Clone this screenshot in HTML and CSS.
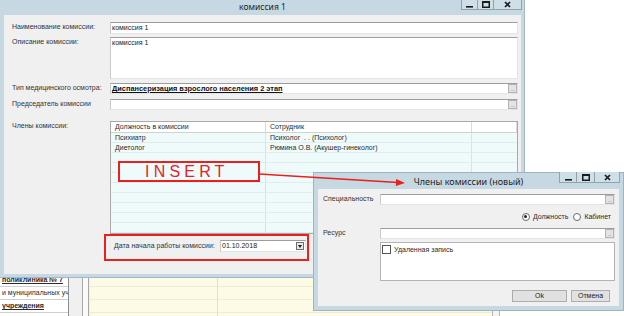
FILE: index.html
```html
<!DOCTYPE html>
<html lang="ru">
<head>
  <meta charset="UTF-8" />
  <meta name="viewport" content="width=device-width, initial-scale=1.0"/>
  <title>Члены комиссии</title>
  <link rel="stylesheet" href="styles.css">
</head>

<body>
  <div class="desk">

    <!-- BACKGROUND APP -->
    <div class="bg-app">
      <div class="tree">
        <div class="tree-row strong">поликлиника № 7</div>
        <div class="tree-row">и муниципальных учреждений</div>
        <div class="tree-row strong">учреждения</div>
      </div>
      <div class="splitter"><span></span></div>
      <div class="sheet"></div>
      <div class="sheet-edge"></div>
    </div>

    <!-- MAIN WINDOW -->
    <div class="win main-win">
      <div class="titlebar">
        <span></span>
        <div class="title">комиссия 1</div>
        <div class="caption-btns">
          <span class="cbtn min"><svg width="7" height="7" viewBox="0 0 7 7"><rect x="0" y="5" width="7" height="1.6" fill="#1a1a1a"/></svg></span>
          <span class="cbtn max"><svg width="8" height="7" viewBox="0 0 8 7"><rect x="0.75" y="0.75" width="6.5" height="5.5" fill="none" stroke="#1a1a1a" stroke-width="1.5"/><rect x="0" y="0" width="8" height="2" fill="#1a1a1a"/></svg></span>
          <span class="cbtn close"><svg width="7" height="7" viewBox="0 0 7 7"><path d="M1 1 L6 6 M6 1 L1 6" stroke="#1a1a1a" stroke-width="1.7"/></svg></span>
        </div>
      </div>

      <div class="client form">
        <div class="row">
          <label>Наименование комиссии:</label>
          <div class="field">комиссия 1</div>
        </div>
        <div class="row gap-3">
          <label>Описание комиссии:</label>
          <div class="field area">комиссия 1</div>
        </div>
        <div class="row gap-4">
          <label>Тип медицинского осмотра:</label>
          <div class="field short pick"><b class="link">Диспансеризация взрослого населения 2 этап</b><span class="dots">...</span></div>
        </div>
        <div class="row gap-5">
          <label>Председатель комиссии</label>
          <div class="field short pick"><span class="dots">...</span></div>
        </div>
        <div class="row gap-11">
          <label>Члены комиссии:</label>
          <div class="members">
            <div class="cell head">Должность в комиссии</div>
            <div class="cell head">Сотрудник</div>
            <div class="cell head"></div>
            <div class="cell">Психиатр</div>
            <div class="cell">Психолог &nbsp;. . (Психолог)</div>
            <div class="cell"></div>
            <div class="cell">Диетолог</div>
            <div class="cell">Рюмина О.В. (Акушер-гинеколог)</div>
            <div class="cell"></div>
            <div class="cell"></div><div class="cell"></div><div class="cell"></div>
            <div class="cell"></div><div class="cell"></div><div class="cell"></div>
            <div class="cell"></div><div class="cell"></div><div class="cell"></div>
            <div class="cell"></div><div class="cell"></div><div class="cell"></div>
            <div class="cell"></div><div class="cell"></div><div class="cell"></div>
            <div class="cell"></div><div class="cell"></div><div class="cell"></div>
            <div class="cell"></div><div class="cell"></div><div class="cell"></div>
            <div class="cell"></div><div class="cell"></div><div class="cell"></div>
          </div>
        </div>
        <div class="row gap-6">
          <span></span>
          <div class="date-row">
            <label>Дата начала работы комиссии:</label>
            <div class="field date">01.10.2018<span class="drop"></span></div>
          </div>
        </div>
      </div>
    </div>

    <!-- DIALOG -->
    <div class="win dlg">
      <div class="titlebar tall">
        <span></span>
        <div class="title">Члены комиссии (новый)</div>
        <div class="caption-btns">
          <span class="cbtn d-min"><svg width="7" height="7" viewBox="0 0 7 7"><rect x="0" y="5" width="7" height="1.6" fill="#1a1a1a"/></svg></span>
          <span class="cbtn d-max"><svg width="8" height="7" viewBox="0 0 8 7"><rect x="0.75" y="0.75" width="6.5" height="5.5" fill="none" stroke="#1a1a1a" stroke-width="1.5"/><rect x="0" y="0" width="8" height="2" fill="#1a1a1a"/></svg></span>
          <span class="cbtn d-close"><svg width="7" height="7" viewBox="0 0 7 7"><path d="M1 1 L6 6 M6 1 L1 6" stroke="#1a1a1a" stroke-width="1.7"/></svg></span>
        </div>
      </div>

      <div class="client dlg-form">
        <div class="drow">
          <label>Специальность</label>
          <div class="field small pick"><span class="dots">...</span></div>
        </div>
        <div class="radios">
          <span class="radio on"></span><span>Должность</span>
          <span class="radio"></span><span>Кабинет</span>
        </div>
        <div class="drow gap-7">
          <label>Ресурс</label>
          <div class="field small pick"><span class="dots">...</span></div>
        </div>
        <div class="drow gap-3">
          <span></span>
          <div class="group">
            <span class="check"></span><span>Удаленная запись</span>
          </div>
        </div>
        <div class="buttons">
          <button class="ok">Ok</button>
          <button class="cancel">Отмена</button>
        </div>
      </div>
    </div>

    <!-- ANNOTATIONS -->
    <div class="mark insert">INSERT</div>
    <div class="mark date-mark"></div>
    <svg class="arrow" width="624" height="316" viewBox="0 0 624 316">
      <line x1="259" y1="174" x2="398" y2="182.5" stroke="#e8201e" stroke-width="1.6"/>
      <polygon points="405,183 396.2,178.9 395.8,186" fill="#e8201e"/>
    </svg>

  </div>
</body>
</html>
```

FILE: styles.css
```css
* {
  box-sizing: border-box;
}

body {
  margin: 0;
  background: #fff;
  font-family: 'Liberation Sans', Arial, sans-serif;
  font-size: 7px;
  color: #2b2b2b;
}

.desk {
  position: relative;
  width: 624px;
  height: 316px;
  overflow: hidden;
  padding-top: 274px;
}

/* background app */
.bg-app {
  display: flex;
  height: 42px;
}

.tree {
  width: 69px;
  background: #fff;
  border-right: 1px solid #8c8c8c;
  overflow: hidden;
}

.tree-row {
  height: 13px;
  line-height: 12px;
  padding-left: 2px;
  border-bottom: 1px solid #d0d0d0;
  white-space: nowrap;
}

.tree-row.strong {
  font-weight: bold;
  text-decoration: underline;
}

.splitter {
  width: 21px;
  background: #f0f0f0;
  padding-left: 13px;
}

.splitter span {
  display: block;
  width: 7px;
  height: 100%;
  background: #fafafa;
  border-left: 1px solid #a8a8a8;
  border-right: 1px solid #a8a8a8;
}

.sheet {
  width: 402px;
  background-color: #fdfbe5;
  background-image:
    linear-gradient(to right, transparent 127px, #e2e0cc 127px, #e2e0cc 128px, transparent 128px),
    repeating-linear-gradient(to bottom, transparent 0, transparent 12px, #efecd6 12px, #efecd6 13px);
}

.sheet-edge {
  width: 8px;
  background: #f4f4f4;
  border-left: 1px solid #b5b5b5;
  border-right: 1px solid #b5b5b5;
}

/* windows */
.win {
  position: absolute;
  background: #c6d8e2;
  display: flex;
  flex-direction: column;
}

.main-win {
  left: 0;
  top: 0;
  width: 525px;
  height: 278px;
  padding: 0 3px 3px 4px;
  border-right: 1px solid #a3b8c3;
  border-bottom: 1px solid #a3b8c3;
}

.dlg {
  left: 313px;
  top: 172px;
  width: 311px;
  height: 139px;
  padding: 0 4px 4px 4px;
  border: 1px solid #9fb4bf;
}

.titlebar {
  height: 15px;
  display: grid;
  grid-template-columns: 1fr auto 1fr;
  align-items: start;
}

.titlebar.tall {
  height: 16px;
}

.title {
  font-family: 'Noto Sans', sans-serif;
  font-size: 8.5px;
  line-height: 14px;
  color: #1e1e1e;
  white-space: nowrap;
}

.tall .title {
  font-size: 9px;
  line-height: 17px;
}

.caption-btns {
  justify-self: end;
  display: flex;
  margin-right: -1px;
}

.cbtn {
  height: 10px;
  display: flex;
  align-items: center;
  justify-content: center;
  border: 1px solid #8ea3ae;
  border-top: none;
  border-left: none;
  background: #cfdfe8;
}

.cbtn:first-child {
  border-left: 1px solid #8ea3ae;
}

.cbtn.min { width: 17px; }
.cbtn.max { width: 16px; }
.cbtn.close { width: 28px; }

.dlg .cbtn {
  height: 11px;
  margin-top: -1px;
}

.cbtn.d-min { width: 18px; }
.cbtn.d-max { width: 18px; }
.cbtn.d-close { width: 25px; }

.client {
  flex: 1;
  background: #f0f0f0;
  display: flex;
  flex-direction: column;
}

/* main form */
.form {
  padding: 7px 3px 0 8px;
}

.row {
  display: grid;
  grid-template-columns: 98px 1fr;
}

.row label {
  line-height: 10px;
  color: #333;
  white-space: nowrap;
}

.gap-3 { margin-top: 3px; }
.gap-4 { margin-top: 4px; }
.gap-5 { margin-top: 5px; }
.gap-6 { margin-top: 6px; }
.gap-7 { margin-top: 7px; }
.gap-11 { margin-top: 11px; }

.field {
  position: relative;
  height: 12px;
  background: #fff;
  border: 1px solid;
  border-color: #9d9d9d #e4e4e4 #e4e4e4 #cacaca;
  padding-left: 1px;
  line-height: 10px;
  color: #222;
  white-space: nowrap;
}

.field.area {
  height: 42px;
}

.field.short {
  height: 11px;
  line-height: 9px;
}

.field.small {
  height: 11px;
}

.link {
  font-size: 7.4px;
  text-decoration: underline;
  color: #111;
}

.dots {
  position: absolute;
  right: 0;
  top: 0;
  width: 9px;
  height: 9px;
  background: #e3e3e3;
  border: 1px solid #b4b4b4;
  color: #8a8a8a;
  font-size: 6px;
  line-height: 8px;
  text-align: center;
  letter-spacing: -0.5px;
}

.members {
  display: grid;
  grid-template-columns: 155px 206px 1fr;
  grid-template-rows: 11px;
  grid-auto-rows: 10px;
  border: 1px solid #a9a9a9;
  background: #effbfb;
}

.cell {
  border-right: 1px solid #d9e3e3;
  border-bottom: 1px solid #e2ecec;
  padding-left: 4px;
  line-height: 9px;
  white-space: nowrap;
  overflow: hidden;
}

.cell:nth-child(3n) {
  border-right: none;
}

.cell.head {
  background: #fff;
  border-bottom: 1px solid #d0d0d0;
  border-right: 1px solid #dadada;
  line-height: 10px;
}

.date-row {
  display: flex;
  padding-left: 4px;
}

.date-row label {
  width: 106px;
  line-height: 12px;
}

.field.date {
  width: 86px;
  line-height: 10px;
}

.drop {
  position: absolute;
  right: 1px;
  top: 1px;
  width: 8px;
  height: 8px;
  border: 1px solid #6f6f6f;
  background: #e8e8e8;
}

.drop::after {
  content: "";
  position: absolute;
  left: 1px;
  top: 2px;
  border-left: 2.5px solid transparent;
  border-right: 2.5px solid transparent;
  border-top: 3px solid #1a1a1a;
}

/* dialog form */
.dlg-form {
  padding: 5px 4px 0 5px;
}

.drow {
  display: grid;
  grid-template-columns: 57px 1fr;
}

.drow label {
  line-height: 10px;
  color: #333;
}

.radios {
  margin-top: 7px;
  height: 9px;
  display: flex;
  justify-content: flex-end;
  align-items: center;
  gap: 3px;
  padding-right: 4px;
  line-height: 9px;
}

.radio {
  width: 8px;
  height: 8px;
  border: 1px solid #6a6a6a;
  border-radius: 50%;
  background: #fff;
  position: relative;
}

.radio:nth-child(3) {
  margin-left: 2px;
}

.radio.on::after {
  content: "";
  position: absolute;
  left: 1.5px;
  top: 1.5px;
  width: 3px;
  height: 3px;
  border-radius: 50%;
  background: #222;
}

.group {
  height: 39px;
  background: #fff;
  border: 1px solid #b3b3b3;
  padding: 2px 1px;
  display: flex;
  align-items: flex-start;
  gap: 3px;
  line-height: 9px;
}

.check {
  width: 9px;
  height: 9px;
  border: 1px solid #555;
  background: #fff;
}

.buttons {
  margin-top: 9px;
  display: flex;
  justify-content: flex-end;
  gap: 4px;
  padding-right: 5px;
}

.buttons button {
  height: 12px;
  padding: 0;
  border: 1px solid #adadad;
  background: #e1e1e1;
  font-family: 'Liberation Sans', Arial, sans-serif;
  font-size: 7px;
  color: #222;
  line-height: 10px;
}

.ok { width: 55px; }
.cancel { width: 39px; }

/* red annotations over the screenshot */
.mark {
  position: absolute;
  border: 2px solid #e8201e;
}

.insert {
  left: 118px;
  top: 161px;
  width: 142px;
  height: 21px;
  padding-left: 25px;
  font-family: 'Liberation Sans', Arial, sans-serif;
  font-size: 16px;
  line-height: 17px;
  letter-spacing: 4.2px;
  color: #e8201e;
  background: #effbfb;
}

.date-mark {
  left: 104px;
  top: 234px;
  width: 205px;
  height: 27px;
}

.arrow {
  position: absolute;
  left: 0;
  top: 0;
  pointer-events: none;
}
```
